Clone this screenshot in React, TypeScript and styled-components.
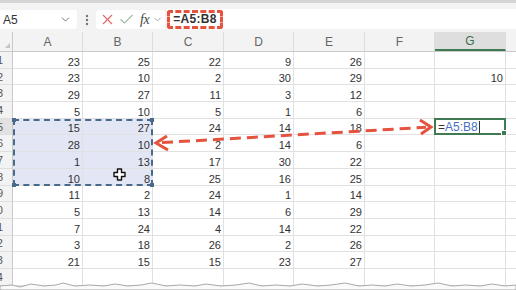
import styled, { createGlobalStyle } from "styled-components";
import { ChevronDown, X, Check, EllipsisVertical } from "lucide-react";

const GlobalStyle = createGlobalStyle`
  html, body {
    margin: 0;
    padding: 0;
    background: #ffffff;
    overflow: hidden;
  }
  body {
    font-family: "Liberation Sans", Arial, sans-serif;
  }
`;

const COLS = ["A", "B", "C", "D", "E", "F", "G", ""];
const WIDTHS = [70, 70, 71, 70, 71, 70, 71, 20];
const ROW_H = 16.7;

const DATA: (number | null)[][] = [
  [23, 25, 22, 9, 26],
  [23, 10, 2, 30, 29],
  [29, 27, 11, 3, 12],
  [5, 10, 5, 1, 6],
  [15, 27, 24, 14, 18],
  [28, 10, 2, 14, 6],
  [1, 13, 17, 30, 22],
  [10, 8, 25, 16, 25],
  [11, 2, 24, 1, 14],
  [5, 13, 14, 6, 29],
  [7, 24, 4, 14, 22],
  [3, 18, 26, 2, 26],
  [21, 15, 15, 23, 27],
  [null, null, null, null, null],
];

function inSel(r: number, c: number) {
  return r >= 4 && r <= 7 && c <= 1;
}

export default function App() {
  return (
    <Page>
      <GlobalStyle />
      <TopStrip />
      <Toolbar>
        <NameBox>
          <span>A5</span>
          <ChevronDown size={13} color="#666" strokeWidth={1.6} />
        </NameBox>
        <Dots>
          <EllipsisVertical size={14} color="#777" strokeWidth={2.2} />
        </Dots>
        <FxGroup>
          <X size={17} color="#e06666" strokeWidth={1.5} />
          <Check size={17} color="#9bb8a0" strokeWidth={1.5} />
          <Fx>fx</Fx>
          <ChevronDown size={11} color="#888" strokeWidth={1.6} />
        </FxGroup>
        <FormulaInput>
          <FormulaText>=A5:B8</FormulaText>
        </FormulaInput>
      </Toolbar>

      <Sheet>
        <HeaderRow>
          <Corner>
            <CornerMark />
          </Corner>
          {COLS.map((c, i) => (
            <ColHead key={i} $w={WIDTHS[i]} $active={c === "G"}>
              {c}
            </ColHead>
          ))}
        </HeaderRow>
        {DATA.map((row, r) => (
          <Row key={r}>
            <RowHead $active={r === 4}>{r + 1}</RowHead>
            {COLS.map((c, ci) => {
              let v: string | number | null = ci < 5 ? row[ci] : null;
              if (c === "G" && r === 1) v = 10;
              return (
                <Cell key={ci} $w={WIDTHS[ci]} $sel={inSel(r, ci)}>
                  {v}
                </Cell>
              );
            })}
          </Row>
        ))}

        <Selection>
          <Handle style={{ left: -3, top: -3 }} />
          <Handle style={{ right: -3, top: -3 }} />
          <Handle style={{ left: -3, bottom: -3 }} />
          <Handle style={{ right: -3, bottom: -3 }} />
          <MoveCursor width="13" height="13" viewBox="0 0 13 13">
            <path
              d="M4.5 1h4v3.5H12v4H8.5V12h-4V8.5H1v-4h3.5z"
              fill="#fff"
              stroke="#111"
              strokeWidth="1.4"
              strokeLinejoin="round"
            />
          </MoveCursor>
        </Selection>

        <ActiveCell>
          <Eq>=</Eq>
          <Ref>A5:B8</Ref>
          <Caret />
          <FillHandle />
        </ActiveCell>
      </Sheet>

      <Overlay width="516" height="290" viewBox="0 0 516 290">
        <g stroke="#e5533f" strokeWidth="3" fill="none" strokeLinecap="butt">
          <line x1="162" y1="142.6" x2="426" y2="127.3" strokeDasharray="11 6" />
          <polyline points="167,136 156,143 168,150" strokeLinejoin="miter" />
          <polyline points="420,120 431,127 421,134" strokeLinejoin="miter" />
        </g>
        <path
          d="M0 286 L12 285 L20 287 L31 284 L44 286 L56 285 L63 283 L75 286 L90 285 L104 286 L115 284 L128 286 L141 285 L152 283 L166 286 L180 285 L195 286 L206 284 L221 286 L236 285 L249 283 L262 286 L276 285 L290 286 L302 284 L318 286 L331 285 L345 283 L359 286 L372 285 L385 286 L397 284 L411 286 L425 285 L438 283 L452 286 L466 285 L480 286 L492 284 L505 286 L516 285 L516 290 L0 290 Z"
          fill="#fafafa"
          stroke="#a9a9a9"
          strokeWidth="1"
        />
      </Overlay>
    </Page>
  );
}

const Page = styled.div`
  position: relative;
  width: 516px;
  height: 290px;
  overflow: hidden;
  background: #ffffff;
`;

const TopStrip = styled.div`
  height: 3px;
  background: #d5d5d5;
`;

const Toolbar = styled.div`
  height: 29px;
  box-sizing: border-box;
  padding-top: 7px;
  display: flex;
  align-items: flex-start;
  background: #f3f3f3;
`;

const NameBox = styled.div`
  width: 77px;
  height: 19px;
  box-sizing: border-box;
  background: #fff;
  border-radius: 0 3px 3px 0;
  display: flex;
  align-items: center;
  justify-content: space-between;
  padding: 0 5px 0 3px;
  font-size: 12px;
  color: #333;
`;

const Dots = styled.div`
  width: 19px;
  height: 19px;
  display: flex;
  align-items: center;
  justify-content: center;
`;

const FxGroup = styled.div`
  width: 69px;
  height: 19px;
  box-sizing: border-box;
  background: #fff;
  border-radius: 3px;
  display: flex;
  align-items: center;
  gap: 2px;
  padding-left: 3px;
`;

const Fx = styled.span`
  font-family: "Liberation Serif", "Times New Roman", serif;
  font-style: italic;
  font-size: 14px;
  color: #444;
  margin: 0 1px 0 3px;
  letter-spacing: -0.5px;
`;

const FormulaInput = styled.div`
  flex: 1;
  height: 20px;
  margin-left: 2px;
  margin-top: -1px;
  background: #fff;
  display: flex;
  align-items: center;
`;

const FormulaText = styled.div`
  width: 56px;
  height: 19px;
  box-sizing: border-box;
  border: 3px dashed #e5533f;
  border-radius: 3px;
  display: flex;
  align-items: center;
  justify-content: center;
  font-size: 12px;
  font-weight: 600;
  color: #333;
  letter-spacing: 0.3px;
`;

const Sheet = styled.div`
  position: relative;
`;

const HeaderRow = styled.div`
  display: flex;
  height: 20px;
  background: #f3f3f3;
  border-bottom: 1px solid #c9c9c9;
  box-sizing: border-box;
`;

const Corner = styled.div`
  width: 13px;
  flex: none;
  position: relative;
  border-right: 1px solid #c9c9c9;
  box-sizing: border-box;
`;

const CornerMark = styled.div`
  position: absolute;
  right: 2px;
  bottom: 3px;
  width: 0;
  height: 0;
  border-left: 5px solid transparent;
  border-bottom: 5px solid #c4c4c4;
`;

const ColHead = styled.div<{ $w: number; $active?: boolean }>`
  width: ${(p) => p.$w}px;
  flex: none;
  box-sizing: border-box;
  display: flex;
  align-items: center;
  justify-content: center;
  font-size: 12px;
  color: ${(p) => (p.$active ? "#3f6e4f" : "#666")};
  background: ${(p) => (p.$active ? "#dedede" : "transparent")};
  border-right: 1px solid #dcdcdc;
  border-bottom: ${(p) => (p.$active ? "2px solid #3f7a52" : "none")};
`;

const Row = styled.div`
  display: flex;
  height: ${ROW_H}px;
`;

const RowHead = styled.div<{ $active?: boolean }>`
  width: 13px;
  flex: none;
  box-sizing: border-box;
  overflow: hidden;
  white-space: nowrap;
  display: flex;
  align-items: center;
  justify-content: flex-end;
  padding-right: 9px;
  font-size: 11px;
  color: #555;
  background: ${(p) => (p.$active ? "#e2e2e2" : "#f3f3f3")};
  border-right: 1px solid #c9c9c9;
  border-bottom: 1px solid #dedede;
`;

const Cell = styled.div<{ $w: number; $sel?: boolean }>`
  width: ${(p) => p.$w}px;
  flex: none;
  box-sizing: border-box;
  display: flex;
  align-items: flex-end;
  justify-content: flex-end;
  padding-right: 2px;
  line-height: 11px;
  font-size: 11px;
  color: #333;
  background: ${(p) => (p.$sel ? "#e3e7f5" : "#fff")};
  border-right: 1px solid #e1e1e1;
  border-bottom: 1px solid #e1e1e1;
`;

const Selection = styled.div`
  position: absolute;
  left: 13px;
  top: ${20 + 4 * ROW_H}px;
  width: 140px;
  height: ${4 * ROW_H}px;
  box-sizing: border-box;
  border: 2px dashed #4a6a8c;
  pointer-events: none;
`;

const Handle = styled.div`
  position: absolute;
  width: 4px;
  height: 4px;
  background: #4a6a8c;
`;

const MoveCursor = styled.svg`
  position: absolute;
  left: 98px;
  top: 47px;
`;

const ActiveCell = styled.div`
  position: absolute;
  left: 434px;
  top: ${20 + 4 * ROW_H - 1}px;
  width: 72px;
  height: ${ROW_H + 1}px;
  box-sizing: border-box;
  border: 2px solid #3f7a52;
  background: #fff;
  display: flex;
  align-items: center;
  padding-left: 2px;
  font-size: 12px;
`;

const Eq = styled.span`
  color: #333;
`;

const Ref = styled.span`
  color: #4a6fc4;
`;

const Caret = styled.span`
  width: 1px;
  height: 12px;
  background: #333;
  margin-left: 1px;
`;

const FillHandle = styled.div`
  position: absolute;
  right: -3px;
  bottom: -3px;
  width: 4px;
  height: 4px;
  background: #3f7a52;
  border: 1px solid #fff;
`;

const Overlay = styled.svg`
  position: absolute;
  left: 0;
  top: 0;
  pointer-events: none;
`;
